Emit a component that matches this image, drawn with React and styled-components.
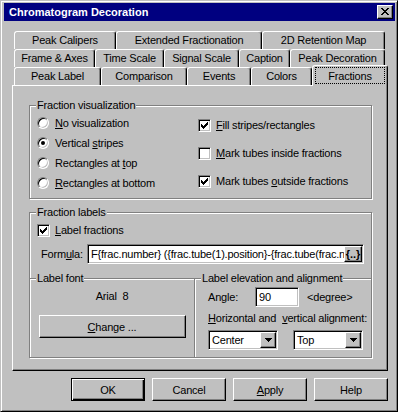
import styled, { createGlobalStyle, css } from "styled-components"

const GlobalStyle = createGlobalStyle`
  html, body {
    margin: 0;
    padding: 0;
    background: #c0c0c0;
  }
  body {
    font-family: "Liberation Sans", Arial, sans-serif;
    font-size: 11px;
    letter-spacing: -0.2px;
    color: #000;
  }
  * {
    box-sizing: border-box;
  }
`

const raised = css`
  background: #c0c0c0;
  border: 1px solid;
  border-color: #fff #000 #000 #fff;
  box-shadow: inset -1px -1px #808080;
`

const sunken = css`
  background: #fff;
  border: 1px solid;
  border-color: #808080 #fff #fff #808080;
  box-shadow: inset 1px 1px #000, inset -1px -1px #c0c0c0;
`

const Window = styled.div`
  display: flex;
  flex-direction: column;
  width: 398px;
  height: 412px;
  padding: 2px 2px 2px 3px;
  background: #c0c0c0;
  border: 1px solid;
  border-color: #c0c0c0 #000 #000 #c0c0c0;
  box-shadow: inset 1px 1px #fff, inset -1px -1px #808080;
`

const TitleBar = styled.div`
  display: flex;
  align-items: center;
  justify-content: space-between;
  height: 18px;
  padding: 0 2px 0 5px;
  background: #000080;
  color: #fff;
  font-weight: bold;
  letter-spacing: 0;
`

const CloseButton = styled.div`
  ${raised};
  display: flex;
  align-items: center;
  justify-content: center;
  width: 16px;
  height: 14px;
  padding: 0 1px 1px 0;
`

const TabStrip = styled.div`
  margin: 10px 7px 0 8px;
`

const TabRow = styled.div`
  display: flex;
  align-items: flex-start;
  height: 18px;
  padding-left: 2px;
`

const Tab = styled.div`
  display: flex;
  align-items: center;
  justify-content: center;
  width: ${(p) => p.$w}px;
  height: 18px;
  padding-bottom: 1px;
  white-space: nowrap;
  border: 1px solid;
  border-bottom: none;
  border-color: #fff #000 transparent #fff;
  border-radius: 3px 3px 0 0;
  box-shadow: inset -1px 0 #808080;
  background: #c0c0c0;
`

const ActiveTab = styled(Tab)`
  position: relative;
  z-index: 1;
  height: 21px;
  margin-top: -2px;
  padding: 1px 2px 2px 2px;
  align-items: stretch;
`

const FocusRect = styled.span`
  flex: 1;
  display: flex;
  align-items: center;
  justify-content: center;
  border: 1px dotted #000;
`

const Panel = styled.div`
  height: 286px;
  margin: 0 7px 0 8px;
  padding: 13px 15px 0 16px;
  border: 1px solid;
  border-color: #fff #000 #000 #fff;
  box-shadow: inset -1px -1px #808080;
`

const Group = styled.fieldset`
  min-width: 0;
  margin: ${(p) => p.$margin || "0"};
  padding: 0;
  border: 1px solid #808080;
  box-shadow: inset 1px 1px #fff, 1px 1px #fff;
`

const Legend = styled.legend`
  margin-left: 6px;
  padding: 0 1px;
  line-height: 13px;
  background: #c0c0c0;
`

const VisGrid = styled.div`
  display: grid;
  grid-template-columns: 161px 1fr;
  padding: 1px 0 5px 7px;
`

const Column = styled.div`
  display: flex;
  flex-direction: column;
  gap: ${(p) => p.$gap || 0}px;
  padding-top: ${(p) => p.$top || 0}px;
`

const OptionRow = styled.label`
  display: flex;
  align-items: center;
  height: 20px;
  white-space: nowrap;
`

const RadioDot = styled.span`
  display: flex;
  align-items: center;
  justify-content: center;
  flex: none;
  width: 12px;
  height: 12px;
  margin-right: 6px;
  border-radius: 50%;
  ${sunken};

  &::after {
    content: "";
    display: ${(p) => (p.$checked ? "block" : "none")};
    width: 4px;
    height: 4px;
    border-radius: 50%;
    background: #000;
  }
`

const CheckBox = styled.span`
  display: flex;
  align-items: center;
  justify-content: center;
  flex: none;
  width: 13px;
  height: 13px;
  margin-right: 5px;
  ${sunken};
`

const LabelsBody = styled.div`
  padding: 1px 7px 0 7px;
`

const FormulaRow = styled.div`
  display: flex;
  align-items: center;
  margin-top: 4px;
`

const FieldLabel = styled.span`
  width: ${(p) => p.$w}px;
  margin-left: ${(p) => p.$indent || 0}px;
  white-space: nowrap;
`

const Field = styled.div`
  ${sunken};
  display: flex;
  align-items: center;
  width: ${(p) => p.$w}px;
  height: 20px;
  padding: 1px;
  overflow: hidden;
`

const FieldText = styled.span`
  flex: 1;
  min-width: 0;
  padding-left: 2px;
  overflow: hidden;
  white-space: nowrap;
`

const EllipsisButton = styled.span`
  ${raised};
  display: flex;
  align-items: center;
  justify-content: center;
  flex: none;
  width: 18px;
  height: 16px;
  font-weight: bold;
  letter-spacing: 0;
`

const SubGroups = styled.div`
  display: grid;
  grid-template-columns: 166px 1fr;
  height: 86px;
  margin: 8px -1px -1px -1px;
`

const FontName = styled.div`
  height: 20px;
  margin-top: 1px;
  line-height: 20px;
  text-align: center;
  white-space: pre;
`

const Button = styled.div`
  ${raised};
  display: flex;
  align-items: center;
  justify-content: center;
  width: ${(p) => p.$w || 74}px;
  height: 23px;
  margin: ${(p) => p.$margin || "0"};

  ${(p) =>
    p.$default &&
    css`
      border-color: #000;
      box-shadow: inset 1px 1px #fff, inset -1px -1px #000, inset -2px -2px #808080;
    `}
`

const ElevBody = styled.div`
  padding: 1px 0 0 13px;
`

const AngleRow = styled.div`
  display: flex;
  align-items: center;
  height: 22px;
`

const Unit = styled.span`
  margin-left: 8px;
`

const AlignLabels = styled.div`
  display: flex;
  margin-top: 3px;
  line-height: 14px;
  white-space: nowrap;

  span + span {
    margin-left: 6px;
  }
`

const ComboRow = styled.div`
  display: flex;
  gap: 15px;
  margin-top: 5px;
`

const Combo = styled.div`
  ${sunken};
  display: flex;
  align-items: center;
  width: 70px;
  height: 20px;
  padding: 1px;
`

const ComboArrow = styled.span`
  ${raised};
  display: flex;
  align-items: center;
  justify-content: center;
  flex: none;
  width: 16px;
  height: 16px;
`

const ButtonRow = styled.div`
  display: flex;
  justify-content: flex-end;
  gap: 7px;
  margin: 7px 7px 0 0;
`

function CloseGlyph() {
  return (
    <svg width="8" height="7" viewBox="0 0 8 7" shapeRendering="crispEdges">
      <path
        fill="#000"
        d="M0 0h2v1h-2z M6 0h2v1h-2z M1 1h2v1h-2z M5 1h2v1h-2z M2 2h4v1h-4z M3 3h2v1h-2z M2 4h4v1h-4z M1 5h2v1h-2z M5 5h2v1h-2z M0 6h2v1h-2z M6 6h2v1h-2z"
      />
    </svg>
  )
}

function CheckGlyph() {
  return (
    <svg width="7" height="7" viewBox="0 0 7 7" shapeRendering="crispEdges">
      <path
        fill="#000"
        d="M6 0h1v1h-1z M5 1h2v1h-2z M0 2h1v1h-1z M4 2h3v1h-3z M0 3h2v1h-2z M3 3h3v1h-3z M0 4h5v1h-5z M1 5h3v1h-3z M2 6h1v1h-1z"
      />
    </svg>
  )
}

function ArrowGlyph() {
  return (
    <svg width="7" height="4" viewBox="0 0 7 4" shapeRendering="crispEdges">
      <path fill="#000" d="M0 0h7v1h-7z M1 1h5v1h-5z M2 2h3v1h-3z M3 3h1v1h-1z" />
    </svg>
  )
}

function Radio({ checked, children }) {
  return (
    <OptionRow>
      <RadioDot $checked={checked} />
      <span>{children}</span>
    </OptionRow>
  )
}

function Check({ checked, children }) {
  return (
    <OptionRow>
      <CheckBox>{checked && <CheckGlyph />}</CheckBox>
      <span>{children}</span>
    </OptionRow>
  )
}

function ComboBox({ value }) {
  return (
    <Combo>
      <FieldText>{value}</FieldText>
      <ComboArrow>
        <ArrowGlyph />
      </ComboArrow>
    </Combo>
  )
}

const tabRows = [
  [
    ["Peak Calipers", 102],
    ["Extended Fractionation", 146],
    ["2D Retention Map", 123],
  ],
  [
    ["Frame & Axes", 81],
    ["Time Scale", 69],
    ["Signal Scale", 75],
    ["Caption", 51],
    ["Peak Decoration", 95],
  ],
  [
    ["Peak Label", 87],
    ["Comparison", 86],
    ["Events", 64],
    ["Colors", 61],
  ],
]

export default function App() {
  return (
    <>
      <GlobalStyle />
      <Window>
        <TitleBar>
          <span>Chromatogram Decoration</span>
          <CloseButton>
            <CloseGlyph />
          </CloseButton>
        </TitleBar>

        <TabStrip>
          {tabRows.map((row, i) => (
            <TabRow key={i}>
              {row.map(([label, w]) => (
                <Tab key={label} $w={w}>
                  {label}
                </Tab>
              ))}
              {i === 2 && (
                <ActiveTab $w={76}>
                  <FocusRect>Fractions</FocusRect>
                </ActiveTab>
              )}
            </TabRow>
          ))}
        </TabStrip>

        <Panel>
          <Group>
            <Legend>Fraction visualization</Legend>
            <VisGrid>
              <Column>
                <Radio>
                  <u>N</u>o visualization
                </Radio>
                <Radio checked>
                  Vertical <u>s</u>tripes
                </Radio>
                <Radio>
                  Rectangles at <u>t</u>op
                </Radio>
                <Radio>
                  <u>R</u>ectangles at bottom
                </Radio>
              </Column>
              <Column $top={2} $gap={8}>
                <Check checked>
                  <u>F</u>ill stripes/rectangles
                </Check>
                <Check>
                  <u>M</u>ark tubes inside fractions
                </Check>
                <Check checked>
                  Mark tubes <u>o</u>utside fractions
                </Check>
              </Column>
            </VisGrid>
          </Group>

          <Group $margin="7px 0 0 0">
            <Legend>Fraction labels</Legend>
            <LabelsBody>
              <Check checked>
                <u>L</u>abel fractions
              </Check>
              <FormulaRow>
                <FieldLabel $w={46} $indent={4}>
                  Form<u>u</u>la:
                </FieldLabel>
                <Field $w={277}>
                  <FieldText>
                    {"F{frac.number} ({frac.tube(1).position}-{frac.tube(frac.number_of_tubes).position})"}
                  </FieldText>
                  <EllipsisButton>{"{..}"}</EllipsisButton>
                </Field>
              </FormulaRow>
            </LabelsBody>

            <SubGroups>
              <Group>
                <Legend>Label font</Legend>
                <FontName>{"Arial  8"}</FontName>
                <Button $w={147} $margin="9px auto 0">
                  <span>
                    <u>C</u>hange ...
                  </span>
                </Button>
              </Group>
              <Group $margin="0 0 0 -1px">
                <Legend>Label elevation and alignment</Legend>
                <ElevBody>
                  <AngleRow>
                    <FieldLabel $w={47}>Angle:</FieldLabel>
                    <Field $w={44}>
                      <FieldText>90</FieldText>
                    </Field>
                    <Unit>{"<degree>"}</Unit>
                  </AngleRow>
                  <AlignLabels>
                    <span>
                      <u>H</u>orizontal and
                    </span>
                    <span>
                      <u>v</u>ertical alignment:
                    </span>
                  </AlignLabels>
                  <ComboRow>
                    <ComboBox value="Center" />
                    <ComboBox value="Top" />
                  </ComboRow>
                </ElevBody>
              </Group>
            </SubGroups>
          </Group>
        </Panel>

        <ButtonRow>
          <Button $default>OK</Button>
          <Button>Cancel</Button>
          <Button>
            <span>
              <u>A</u>pply
            </span>
          </Button>
          <Button>Help</Button>
        </ButtonRow>
      </Window>
    </>
  )
}
